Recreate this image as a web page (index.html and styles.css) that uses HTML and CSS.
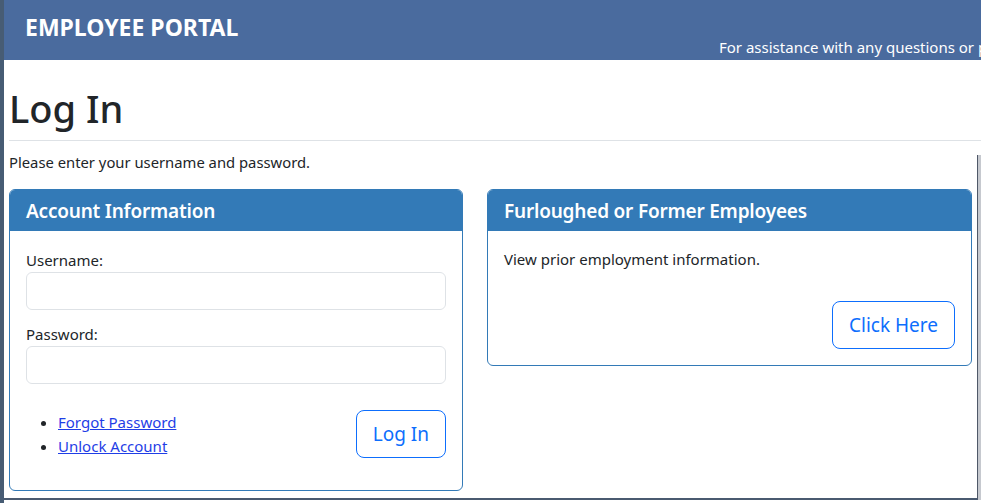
FILE: index.html
```html
<!DOCTYPE html>
<html lang="en">
<head>
<meta charset="utf-8">
<title>Employee Portal - Log In</title>
<link rel="stylesheet" href="styles.css">
</head>
<body>
<div class="page">
  <header class="topbar">
    <div class="brand">EMPLOYEE PORTAL</div>
    <div class="assist">For assistance with any questions or problems, please contact the Help Desk.</div>
  </header>
  <div class="title-area">
    <h1 class="page-title">Log In</h1>
  </div>
  <main class="content">
    <p class="intro">Please enter your username and password.</p>
    <div class="cards">
      <section class="card">
        <h2 class="card-header">Account Information</h2>
        <div class="card-body card-body-login">
          <label class="field-label" for="username">Username:</label>
          <input class="field-input" id="username" type="text">
          <label class="field-label field-label-next" for="password">Password:</label>
          <input class="field-input" id="password" type="password">
          <div class="actions">
            <ul class="links">
              <li><a href="#">Forgot Password</a></li>
              <li><a href="#">Unlock Account</a></li>
            </ul>
            <button class="btn-outline" type="button">Log In</button>
          </div>
        </div>
      </section>
      <section class="card">
        <h2 class="card-header">Furloughed or Former Employees</h2>
        <div class="card-body">
          <p class="card-text">View prior employment information.</p>
          <div class="card-actions">
            <button class="btn-outline" type="button">Click Here</button>
          </div>
        </div>
      </section>
    </div>
  </main>
</div>
</body>
</html>
```

FILE: styles.css
```css
html, body {
  margin: 0;
  padding: 0;
  background: #ffffff;
}

body {
  font-family: "Noto Sans", "Open Sans", sans-serif;
  font-size: 15px;
  line-height: 24px;
  color: #212529;
}

.page {
  width: 981px;
  height: 503px;
  box-sizing: border-box;
  border-left: 4px solid #475c74;
  display: flex;
  flex-direction: column;
  overflow: hidden;
}

.topbar {
  flex: 0 0 60px;
  height: 60px;
  background: #4a6b9e;
  color: #ffffff;
  display: grid;
  grid-template-columns: 715px auto;
  white-space: nowrap;
  overflow: hidden;
}

.brand {
  font-size: 23px;
  font-weight: 700;
  line-height: 30px;
  padding: 12px 0 0 21px;
}

.assist {
  font-size: 15px;
  line-height: 20px;
  padding-top: 37px;
}

.title-area {
  margin-left: 5px;
  padding-top: 24px;
  padding-bottom: 8px;
  border-bottom: 1px solid #dee2e6;
}

.page-title {
  margin: 0;
  font-size: 38px;
  line-height: 48px;
  font-weight: 500;
}

.content {
  flex: 1;
  margin: 14px 3px 3px 0;
  padding: 0 5px 0 5px;
  border-right: 1px solid #4f5868;
  border-bottom: 2px solid #4a5a70;
  box-shadow: 3px 0 0 #c6c9cf;
}

.intro {
  margin: 0 0 20px;
  font-size: 14.8px;
  line-height: 14px;
}

.cards {
  display: grid;
  grid-template-columns: 454px 1fr;
  column-gap: 24px;
  align-items: start;
}

.card {
  border: 1px solid #337ab7;
  border-radius: 6px;
  overflow: hidden;
}

.card-header {
  margin: 0;
  background: #337ab7;
  color: #ffffff;
  font-size: 19px;
  letter-spacing: -0.2px;
  font-weight: 600;
  line-height: 24px;
  padding: 9px 16px 8px;
}

.card-body {
  padding: 16px;
}

.card-body-login {
  padding-bottom: 32px;
}

.field-label {
  display: block;
  margin-top: 1px;
}

.field-label-next {
  margin-top: 12px;
}

.field-input {
  display: block;
  width: 100%;
  height: 38px;
  box-sizing: border-box;
  border: 1px solid #dee2e6;
  border-radius: 6px;
  background: #ffffff;
  font: inherit;
  padding: 6px 12px;
}

.actions {
  margin-top: 26px;
  display: flex;
  justify-content: space-between;
  align-items: flex-start;
}

.links {
  margin: 0;
  padding-left: 32px;
}

.links a {
  color: #1f3ee6;
  text-decoration: underline;
}

.btn-outline {
  font-family: inherit;
  font-size: 19px;
  line-height: 30px;
  padding: 8px 16px;
  border: 1px solid #0d6efd;
  border-radius: 8px;
  background: transparent;
  color: #0d6efd;
  cursor: pointer;
}

.card-text {
  margin: 0;
}

.card-actions {
  margin-top: 30px;
  display: flex;
  justify-content: flex-end;
}
```
